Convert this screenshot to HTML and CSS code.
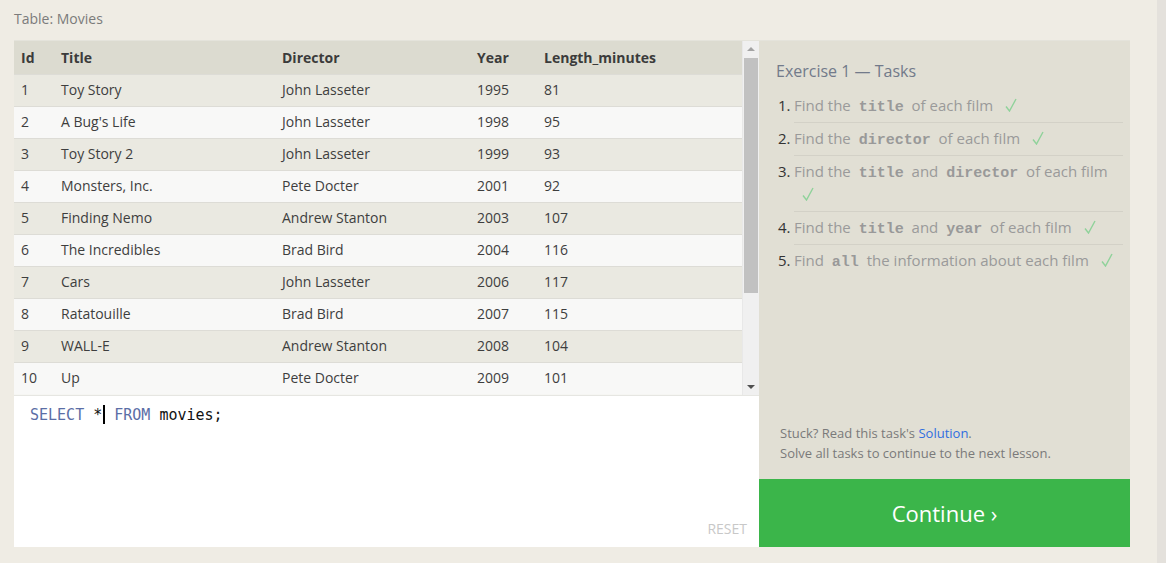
FILE: index.html
```html
<!DOCTYPE html>
<html>
<head>
<meta charset="utf-8">
<link rel="stylesheet" href="styles.css">
</head>
<body>
<div class="page">
  <div class="main">
    <div class="caption">Table: Movies</div>
    <div class="workspace">
      <div class="left">
        <div class="table-wrap">
          <div class="table-scroll">
            <table class="data">
              <thead>
                <tr><th class="c-id">Id</th><th class="c-title">Title</th><th class="c-dir">Director</th><th class="c-year">Year</th><th>Length_minutes</th></tr>
              </thead>
              <tbody>
                <tr><td>1</td><td>Toy Story</td><td>John Lasseter</td><td>1995</td><td>81</td></tr>
                <tr><td>2</td><td>A Bug's Life</td><td>John Lasseter</td><td>1998</td><td>95</td></tr>
                <tr><td>3</td><td>Toy Story 2</td><td>John Lasseter</td><td>1999</td><td>93</td></tr>
                <tr><td>4</td><td>Monsters, Inc.</td><td>Pete Docter</td><td>2001</td><td>92</td></tr>
                <tr><td>5</td><td>Finding Nemo</td><td>Andrew Stanton</td><td>2003</td><td>107</td></tr>
                <tr><td>6</td><td>The Incredibles</td><td>Brad Bird</td><td>2004</td><td>116</td></tr>
                <tr><td>7</td><td>Cars</td><td>John Lasseter</td><td>2006</td><td>117</td></tr>
                <tr><td>8</td><td>Ratatouille</td><td>Brad Bird</td><td>2007</td><td>115</td></tr>
                <tr><td>9</td><td>WALL-E</td><td>Andrew Stanton</td><td>2008</td><td>104</td></tr>
                <tr><td>10</td><td>Up</td><td>Pete Docter</td><td>2009</td><td>101</td></tr>
              </tbody>
            </table>
          </div>
          <div class="scrollbar">
            <div class="arrow up"></div>
            <div class="track"><div class="thumb"></div></div>
            <div class="arrow down"></div>
          </div>
        </div>
        <div class="editor">
          <div class="code"><span class="kw">SELECT</span> *<span class="cursor"></span> <span class="kw">FROM</span> movies;</div>
          <div class="reset">RESET</div>
        </div>
      </div>
      <div class="right">
        <div class="tasks">
          <div class="tasks-title">Exercise 1 — Tasks</div>
          <ol class="task-list">
            <li><span class="num">1.</span><span class="txt">Find the <code>title</code> of each film <svg class="check" viewBox="0 0 12 14" width="12" height="14"><path d="M1 8.5 L4.5 13 L11 1" /></svg></span></li>
            <li><span class="num">2.</span><span class="txt">Find the <code>director</code> of each film <svg class="check" viewBox="0 0 12 14" width="12" height="14"><path d="M1 8.5 L4.5 13 L11 1" /></svg></span></li>
            <li><span class="num">3.</span><span class="txt">Find the <code>title</code> and <code>director</code> of each film <svg class="check" viewBox="0 0 12 14" width="12" height="14"><path d="M1 8.5 L4.5 13 L11 1" /></svg></span></li>
            <li><span class="num">4.</span><span class="txt">Find the <code>title</code> and <code>year</code> of each film <svg class="check" viewBox="0 0 12 14" width="12" height="14"><path d="M1 8.5 L4.5 13 L11 1" /></svg></span></li>
            <li><span class="num">5.</span><span class="txt">Find <code>all</code> the information about each film <svg class="check" viewBox="0 0 12 14" width="12" height="14"><path d="M1 8.5 L4.5 13 L11 1" /></svg></span></li>
          </ol>
          <div class="help">
            <p>Stuck? Read this task's <a href="#">Solution</a>.</p>
            <p>Solve all tasks to continue to the next lesson.</p>
          </div>
        </div>
        <button class="continue">Continue ›</button>
      </div>
    </div>
  </div>
  <div class="page-scroll"></div>
</div>
</body>
</html>
```
FILE: styles.css
```css
* { box-sizing: border-box; }
html, body { margin: 0; padding: 0; }
body {
  background: #efece4;
  font-family: "Open Sans", "Noto Sans", sans-serif;
  color: #333;
  width: 1166px;
  height: 563px;
  overflow: hidden;
}
.page { display: flex; height: 563px; }
.main { flex: 1; padding: 9px 0 0 14px; }
.page-scroll { width: 9px; background: #e4e1dc; }
.caption { font-size: 14px; color: #7b7b7b; height: 31px; line-height: 20px; }
.workspace { display: flex; width: 1116px; }
.left { width: 745px; display: flex; flex-direction: column; }
.table-wrap { display: flex; height: 355px; background: #f6f6f3; border-top: 1px solid #e4e3db; }
.table-scroll { flex: 1; overflow: hidden; }
.data { border-collapse: collapse; width: 100%; font-size: 14px; }
.data th { background: #dcdbd0; text-align: left; font-weight: 700; color: #3b3b3b; height: 33px; padding: 0 0 0 7px; }
.data td { height: 32px; padding: 0 0 1px 7px; color: #3e3e3e; border-top: 1px solid #dddcd6; }
.data tbody tr:nth-child(odd) td { background: #eae9e1; }
.data tbody tr:nth-child(even) td { background: #f8f8f7; }
.c-id { width: 40px; }
.c-title { width: 221px; }
.c-dir { width: 195px; }
.c-year { width: 67px; }
.scrollbar { width: 17px; background: #f0f0f0; display: flex; flex-direction: column; border-left: 1px solid #e8e8e8; }
.arrow { height: 17px; position: relative; }
.arrow::after { content: ""; position: absolute; left: 4px; border-left: 4px solid transparent; border-right: 4px solid transparent; }
.arrow.up::after { top: 6px; border-bottom: 4px solid #a3a3a3; }
.arrow.down::after { top: 7px; border-top: 4px solid #505050; }
.track { flex: 1; padding: 0 1px; }
.thumb { height: 235px; background: #c1c1c1; }
.editor { background: #fff; height: 152px; position: relative; border-top: 1px solid #e6e6e2; }
.code { font-family: "DejaVu Sans Mono", "Liberation Mono", monospace; font-size: 15px; padding: 9px 0 0 16px; color: #111; }
.kw { color: #5b6ea6; }
.cursor { display: inline-block; width: 2px; height: 19px; background: #000; vertical-align: -4px; margin-left: 1px; }
.reset { position: absolute; right: 12px; bottom: 9px; font-size: 14px; color: #c8c8c8; }
.right { width: 371px; display: flex; flex-direction: column; margin-top: 0; }
.tasks { flex: 1; background: #e1dfd4; padding: 19px 7px 0 17px; display: flex; flex-direction: column; border-top: 1px solid #e4e3db; }
.tasks-title { font-size: 16px; color: #727a8a; margin-bottom: 8px; }
.task-list { list-style: none; margin: 0; padding: 0; }
.task-list li { display: flex; font-size: 15px; color: #9a9a9a; line-height: 23px; padding: 4px 0 5px 0; }
.txt { line-height: 23px; }
.task-list li + li { border-top: 1px solid #d3d1c7; margin-left: 18px; }
.task-list li + li .num { margin-left: -18px; }
.num { color: #333; width: 18px; flex: none; padding-left: 2px; }
code { font-family: "Liberation Mono", "DejaVu Sans Mono", monospace; font-weight: 700; color: #999; font-size: 15px; line-height: 1; padding: 0 4px; }
.check { fill: none; stroke: #8fd29a; stroke-width: 1.4; margin-left: 8px; vertical-align: -1px; }
.help { margin-top: auto; padding: 0 0 16px 4px; font-size: 13px; color: #7a7a7a; }
.help p { margin: 0; line-height: 20px; }
.help a { color: #2f6ee0; text-decoration: none; }
.continue { height: 68px; border: 0; background: #3bb54a; color: #fff; font-family: "Open Sans", sans-serif; font-size: 22px; width: 100%; cursor: pointer; }
```
